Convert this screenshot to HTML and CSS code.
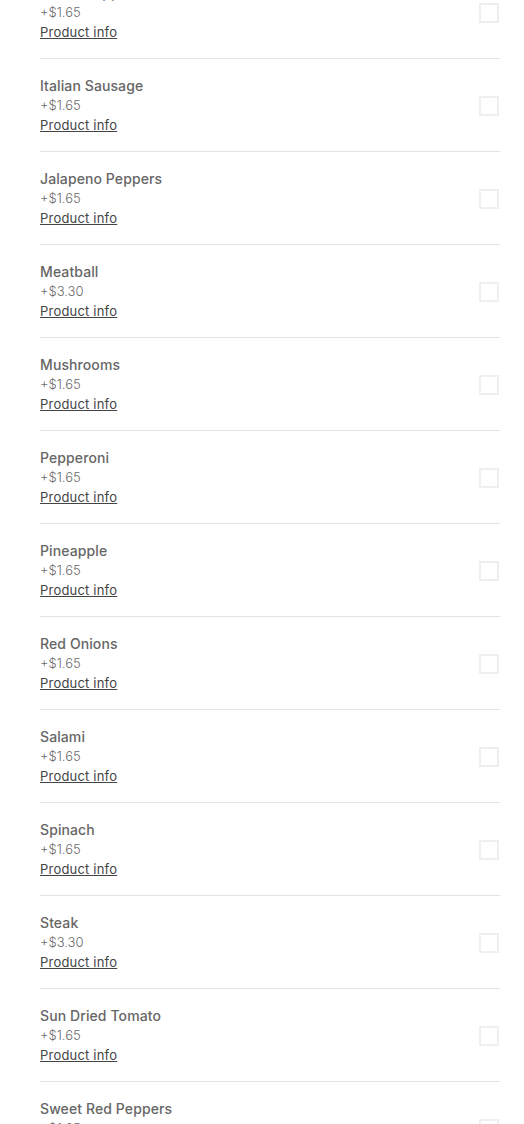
FILE: index.html
```html
<!DOCTYPE html>
<html lang="en">
  <head>
    <meta charset="UTF-8" />
    <meta name="viewport" content="width=device-width, initial-scale=1.0" />
    <title>Toppings</title>
    <link rel="stylesheet" href="styles.css">
  </head>
  <body>
    <ul class="toppings"><!-- Topping list -->
      <li class="item">
        <div class="info">
          <span class="name">Green Peppers</span>
          <span class="price">+$1.65</span>
          <a class="more" href="#">Product info</a>
        </div>
        <input class="check" type="checkbox" />
      </li>
      <li class="item">
        <div class="info">
          <span class="name">Italian Sausage</span>
          <span class="price">+$1.65</span>
          <a class="more" href="#">Product info</a>
        </div>
        <input class="check" type="checkbox" />
      </li>
      <li class="item">
        <div class="info">
          <span class="name">Jalapeno Peppers</span>
          <span class="price">+$1.65</span>
          <a class="more" href="#">Product info</a>
        </div>
        <input class="check" type="checkbox" />
      </li>
      <li class="item">
        <div class="info">
          <span class="name">Meatball</span>
          <span class="price">+$3.30</span>
          <a class="more" href="#">Product info</a>
        </div>
        <input class="check" type="checkbox" />
      </li>
      <li class="item">
        <div class="info">
          <span class="name">Mushrooms</span>
          <span class="price">+$1.65</span>
          <a class="more" href="#">Product info</a>
        </div>
        <input class="check" type="checkbox" />
      </li>
      <li class="item">
        <div class="info">
          <span class="name">Pepperoni</span>
          <span class="price">+$1.65</span>
          <a class="more" href="#">Product info</a>
        </div>
        <input class="check" type="checkbox" />
      </li>
      <li class="item">
        <div class="info">
          <span class="name">Pineapple</span>
          <span class="price">+$1.65</span>
          <a class="more" href="#">Product info</a>
        </div>
        <input class="check" type="checkbox" />
      </li>
      <li class="item">
        <div class="info">
          <span class="name">Red Onions</span>
          <span class="price">+$1.65</span>
          <a class="more" href="#">Product info</a>
        </div>
        <input class="check" type="checkbox" />
      </li>
      <li class="item">
        <div class="info">
          <span class="name">Salami</span>
          <span class="price">+$1.65</span>
          <a class="more" href="#">Product info</a>
        </div>
        <input class="check" type="checkbox" />
      </li>
      <li class="item">
        <div class="info">
          <span class="name">Spinach</span>
          <span class="price">+$1.65</span>
          <a class="more" href="#">Product info</a>
        </div>
        <input class="check" type="checkbox" />
      </li>
      <li class="item">
        <div class="info">
          <span class="name">Steak</span>
          <span class="price">+$3.30</span>
          <a class="more" href="#">Product info</a>
        </div>
        <input class="check" type="checkbox" />
      </li>
      <li class="item">
        <div class="info">
          <span class="name">Sun Dried Tomato</span>
          <span class="price">+$1.65</span>
          <a class="more" href="#">Product info</a>
        </div>
        <input class="check" type="checkbox" />
      </li>
      <li class="item">
        <div class="info">
          <span class="name">Sweet Red Peppers</span>
          <span class="price">+$1.65</span>
          <a class="more" href="#">Product info</a>
        </div>
        <input class="check" type="checkbox" />
      </li>
    </ul>
  </body>
</html>
```

FILE: styles.css
```css
* {
  margin: 0;
  padding: 0;
  box-sizing: border-box;
}
body {
  background: #fff;
  font-family: Inter, "Liberation Sans", sans-serif;
  overflow: hidden;
}
.toppings {  /* list is scrolled, first row cut off */
  list-style: none;
  margin: -35px 24px 0 40px;
}
.item {
  display: flex;
  align-items: center;
  justify-content: space-between;
  padding: 17px 0 16px;
  border-top: 1px solid #e2e2e2;
}
.item:first-child {
  border-top: none;
  padding-top: 18px;
}
.info {
  display: flex;
  flex-direction: column;
}
.name {
  font-size: 14px;
  font-weight: 500;
  line-height: 20px;
  letter-spacing: 0.1px;
  color: #666;
}
.price {
  font-size: 13px;
  font-weight: 300;
  line-height: 19px;
  color: #6b6b6b;
}
.more {
  margin-top: 1px;
  font-size: 13px;
  line-height: 19px;
  letter-spacing: 0.2px;
  color: #444;
  text-decoration: underline;
}
.check {  /* plain square checkbox */
  appearance: none;
  width: 20px;
  height: 20px;
  margin-right: 1px;
  border: 2px solid #efefef;
  background: #fff;
}
```
